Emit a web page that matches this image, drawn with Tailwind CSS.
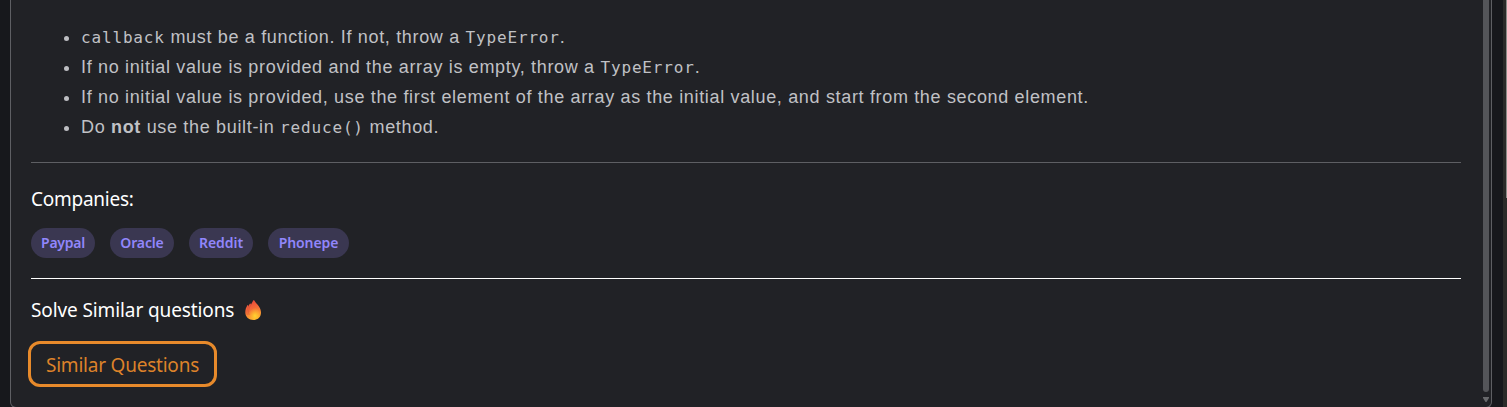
<!DOCTYPE html>
<html lang="en">
<head>
<meta charset="utf-8">
<title>Problem description</title>
<script src="https://cdn.jsdelivr.net/npm/@tailwindcss/browser@4"></script>
</head>
<body class="flex h-[407px] overflow-hidden bg-[#17181c] pl-[10px]">
<main class="relative h-[408px] w-[1482px] shrink-0 rounded-b-[6px] border-x border-b border-[#5e5f63] bg-[#212226] pl-5 pr-[30px]">
  <ul class="list-none pt-[22px] font-['Liberation_Sans',sans-serif] text-[18px] leading-[30px] tracking-[0.665px] text-[#c0c1c5]">
    <li class="flex h-[30px] items-center pl-[33px]"><span class="mr-[12px] mt-[3px] size-[5px] rounded-full bg-[#bdbec2]"></span><p class="h-[30px] whitespace-pre"><code class="font-['DejaVu_Sans_Mono',monospace] text-[16px] tracking-[0.84px]">callback</code> must be a function. If not, throw a <code class="font-['DejaVu_Sans_Mono',monospace] text-[16px] tracking-[0.84px]">TypeError</code>.</p></li>
    <li class="flex h-[30px] items-center pl-[33px]"><span class="mr-[12px] mt-[3px] size-[5px] rounded-full bg-[#bdbec2]"></span><p class="h-[30px] whitespace-pre">If no initial value is provided and the array is empty, throw a <code class="font-['DejaVu_Sans_Mono',monospace] text-[16px] tracking-[0.84px]">TypeError</code>.</p></li>
    <li class="flex h-[30px] items-center pl-[33px]"><span class="mr-[12px] mt-[3px] size-[5px] rounded-full bg-[#bdbec2]"></span><p class="h-[30px] whitespace-pre">If no initial value is provided, use the first element of the array as the initial value, and start from the second element.</p></li>
    <li class="flex h-[30px] items-center pl-[33px]"><span class="mr-[12px] mt-[3px] size-[5px] rounded-full bg-[#bdbec2]"></span><p class="h-[30px] whitespace-pre">Do <b>not</b> use the built-in <code class="font-['DejaVu_Sans_Mono',monospace] text-[16px] tracking-[0.84px]">reduce()</code> method.</p></li>
  </ul>
  <hr class="mt-5 border-[#5e5f63]">
  <section class="font-['Noto_Sans','Open_Sans',sans-serif]">
    <h2 class="mt-[21px] h-[30px] whitespace-nowrap text-[19px] leading-[30px] tracking-[-0.25px] text-white">Companies:</h2>
    <div class="mt-[14px] flex gap-[15px] text-[14px] font-semibold leading-[30px] text-[#9186fb]">
      <span class="h-[30px] w-16 rounded-full bg-[#3a3751] text-center tracking-[-0.25px]">Paypal</span>
      <span class="h-[30px] w-16 rounded-full bg-[#3a3751] text-center tracking-[-0.15px]">Oracle</span>
      <span class="h-[30px] w-16 rounded-full bg-[#3a3751] text-center tracking-[-0.05px]">Reddit</span>
      <span class="h-[30px] w-[81px] rounded-full bg-[#3a3751] text-center tracking-[-0.1px]">Phonepe</span>
    </div>
  </section>
  <hr class="mt-5 border-white">
  <section class="font-['Noto_Sans','Open_Sans',sans-serif]">
    <h2 class="mt-4 flex h-[30px] items-center whitespace-nowrap text-[19px] leading-[30px] text-white"><span class="w-[214px] tracking-[-0.11px]">Solve Similar questions</span>
      <svg class="h-5 w-4" viewBox="0 0 16 20" aria-hidden="true">
        <defs><linearGradient id="flame" x1=".3" y1="0" x2=".6" y2="1"><stop offset="0" stop-color="#e9433b"/><stop offset=".45" stop-color="#f46c38"/><stop offset="1" stop-color="#ffb52d"/></linearGradient>
        <radialGradient id="glow" cx=".6" cy=".75" r=".6"><stop offset="0" stop-color="#ffd52f"/><stop offset="1" stop-color="#ffb02e" stop-opacity="0"/></radialGradient></defs>
        <path fill="url(#flame)" d="M8.600.200C9.100 0 9.400.400 9.700.900c.700 1.700 2.700 3.200 4.100 5.400C15.100 8.300 16 10.400 16 12.500c0 4.600-3.200 7.500-7.600 7.500S.300 17.100.300 12.300c0-2.700.800-5.100 2-6.900.300-.500.800-.400.900.100l.200 1.200c.200-1.300.800-2.300 1.500-3 .400-.400.800-.200.900.300l.200.800C6.700 3.300 7.700 1.800 8.100.600Z"/>
        <path fill="url(#glow)" d="M9.600 5.500c1 3 4.900 4.400 4.900 8.500 0 3.300-2.400 5.300-5.800 5.300-3.500 0-5.400-2.300-5.400-5.100C3.300 10.500 9 10 9.600 5.500Z"/>
        <path fill="none" stroke="#c9443a" stroke-opacity=".65" stroke-width=".6" d="M6 4.800C3.500 8.500 3 12 4.200 15M3.300 7C1.800 10 1.600 12.500 2.300 15"/>
      </svg></h2>
  </section>
  <button class="-ml-[3px] mt-4 block h-[46px] w-[189px] whitespace-nowrap rounded-[12px] border-3 border-[#e78a2b] pt-px font-['Noto_Sans','Open_Sans',sans-serif] text-[19px] leading-[30px] tracking-[-0.22px] text-[#dd822a]">Similar Questions</button>
  <div class="absolute right-[2px] top-0 h-[407px] w-[6px]">
    <div class="h-[392px] rounded-b-full bg-[#545559]"></div>
    <svg class="mt-[5px] h-[5px] w-[6px]" viewBox="0 0 6 5" aria-hidden="true"><path fill="#68696c" d="M0 0h6v1L3.500 5h-1L0 1Z"/></svg>
  </div>
</main>
<aside class="ml-[11px] h-[407px] w-[4px] shrink-0 bg-[#2b2b29]"><div class="ml-auto h-[198px] w-px bg-[#8c8c88]"></div></aside>
</body>
</html>
